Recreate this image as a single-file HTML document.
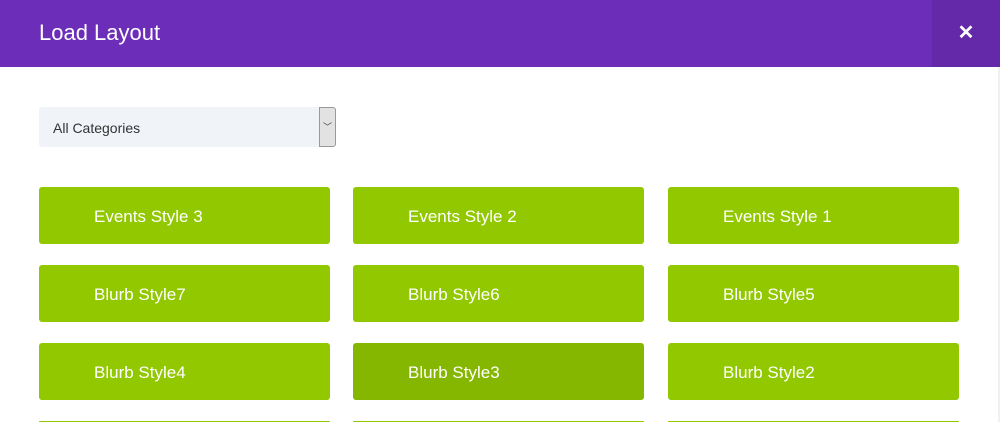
<!DOCTYPE html>
<html style="overflow:hidden;height:422px"><head><style>
body{margin:0;width:1000px;height:422px;overflow:hidden;background:#fff;font-family:"Liberation Sans",sans-serif;position:relative}
.hd{position:absolute;left:0;top:0;width:1000px;height:67px;background:#6c2eb9}
.hd h1{position:absolute;left:39px;top:20px;margin:0;font-weight:normal;font-size:22px;color:#fff}
.x{position:absolute;left:932px;top:0;width:68px;height:67px;background:#6329a8;color:#fff;font-size:20px;text-align:center;line-height:67px;font-weight:bold}
.sel{position:absolute;left:39px;top:107px;width:297px;height:40px;background:#f0f3f8;border-radius:3px}
.sel span{position:absolute;left:14px;top:13px;font-size:14px;color:#333}
.arr{position:absolute;right:0;top:0;width:15px;height:38px;background:#e2e2e2;border:1px solid #999;border-radius:0 3px 3px 0;font-size:9px;text-align:center;line-height:38px;color:#444}
.b{position:absolute;width:291px;height:57px;background:#92c800;border-radius:3px;color:#fff;font-size:17px;line-height:59px;box-sizing:border-box;padding-left:55px}
.sb{position:absolute;left:998px;top:67px;width:2px;height:355px;background:#eef0f4}
</style></head><body>
<div class="hd"><h1>Load Layout</h1><div class="x">✕</div></div>
<div class="sel"><span>All Categories</span><div class="arr">﹀</div></div>
<div class="b" style="left:39px;top:187px">Events Style 3</div>
<div class="b" style="left:353px;top:187px">Events Style 2</div>
<div class="b" style="left:668px;top:187px">Events Style 1</div>
<div class="b" style="left:39px;top:265px">Blurb Style7</div>
<div class="b" style="left:353px;top:265px">Blurb Style6</div>
<div class="b" style="left:668px;top:265px">Blurb Style5</div>
<div class="b" style="left:39px;top:343px">Blurb Style4</div>
<div class="b" style="left:353px;top:343px;background:#86b700">Blurb Style3</div>
<div class="b" style="left:668px;top:343px">Blurb Style2</div>
<div class="b" style="left:39px;top:421px;height:1px"></div>
<div class="b" style="left:353px;top:421px;height:1px"></div>
<div class="b" style="left:668px;top:421px;height:1px"></div>
<div class="sb"></div>
</body></html>
